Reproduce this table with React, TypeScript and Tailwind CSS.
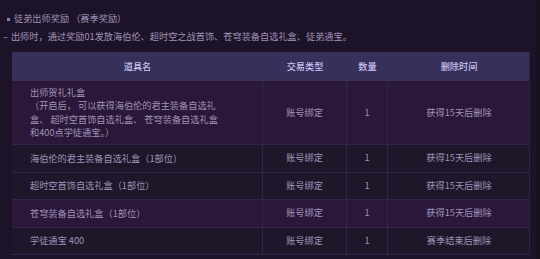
const rows = [
  {
    name: (
      <>
        出师贺礼礼盒
        <br />
        （开启后， 可以获得海伯伦的君主装备自选礼
        <br />
        盒、 超时空首饰自选礼盒、 苍穹装备自选礼盒
        <br />
        和400点学徒通宝。）
      </>
    ),
    del: '获得15天后删除',
    tall: true,
    purple: true,
  },
  { name: '海伯伦的君主装备自选礼盒（1部位）', del: '获得15天后删除', purple: false },
  { name: '超时空首饰自选礼盒（1部位）', del: '获得15天后删除', purple: false },
  { name: '苍穹装备自选礼盒（1部位）', del: '获得15天后删除', purple: true },
  { name: '学徒通宝 400', del: '赛季结束后删除', purple: false },
];

export default function App() {
  return (
    <div
      className="w-[540px] h-[259px] bg-[#1d1328] border-r-4 border-[#17101f] overflow-hidden text-[9.2px] text-[#a093b8]"
      style={{ fontFamily: '"Noto Sans CJK SC", "Noto Sans", sans-serif' }}
    >
      <div className="pt-[11px] pl-[7px] flex items-center gap-[4px] h-[16px] box-content">
        <span className="w-[3px] h-[3px] bg-[#8a7fb0]" />
        <span>徒弟出师奖励 （赛季奖励）</span>
      </div>
      <div className="pl-[3px] mt-[2px] h-[16px] flex items-center gap-[3px]">
        <span>–</span>
        <span>出师时，通过奖励01发放海伯伦、超时空之战首饰、苍穹装备自选礼盒、徒弟通宝。</span>
      </div>
      <div className="mt-[7px] ml-[12px] w-[518px] border-r border-[#2e2340]">
        <div className="grid grid-cols-[251px_84px_41px_142px] h-[29px] bg-[#37305a] text-[#c8c1f2] font-medium">
          <div className="flex items-center justify-center">道具名</div>
          <div className="flex items-center justify-center">交易类型</div>
          <div className="flex items-center justify-center">数量</div>
          <div className="flex items-center justify-center">删除时间</div>
        </div>
        {rows.map((r, i) => (
          <div
            key={i}
            className={`grid grid-cols-[251px_84px_41px_142px] border-b border-[#30264a] ${
              r.tall ? 'h-[64px]' : 'h-[27.5px]'
            } ${r.purple ? 'bg-[#2a1739]' : 'bg-[#1e1729]'}`}
          >
            <div className="flex items-center pl-[18px] leading-[13.5px] border-r border-[#30264a]">
              <div>{r.name}</div>
            </div>
            <div className="flex items-center justify-center border-r border-[#30264a]">账号绑定</div>
            <div className="flex items-center justify-center border-r border-[#30264a]">1</div>
            <div className="flex items-center justify-center">{r.del}</div>
          </div>
        ))}
      </div>
    </div>
  );
}
